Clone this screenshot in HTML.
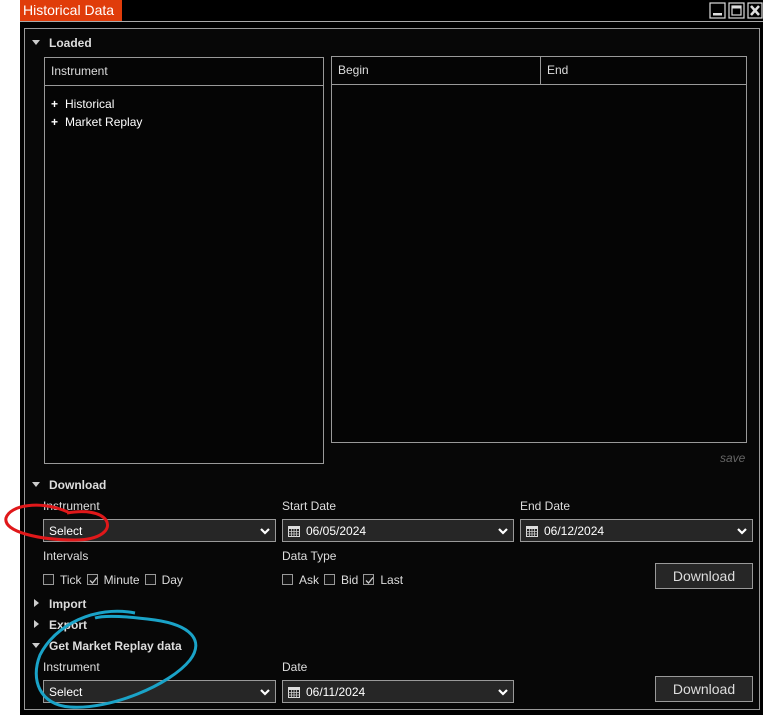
<!DOCTYPE html>
<html><head><meta charset="utf-8"><style>
*{margin:0;padding:0;box-sizing:border-box}
body{width:763px;height:715px;background:#fff;position:relative;overflow:hidden;font-family:"Liberation Sans",Arial,sans-serif;font-size:12px;color:#ddd}
.a{position:absolute}
.win{left:20px;top:0;width:743px;height:715px;background:#000}
.title{left:20px;top:0;width:102px;height:21px;background:#e03c0a;color:#fff;font-size:14px;line-height:21px;padding-left:3px}
.hl{left:20px;top:21px;width:743px;height:1px;background:#aaa}
.panel{left:24px;top:28px;width:736px;height:682px;border:1px solid #999;background:#070707}
.box{border:1px solid #999;background:#050505}
.hdr{border-bottom:1px solid #999;height:28px;line-height:27px;padding-left:6px;color:#ddd}
.bold{font-weight:bold;color:#ddd}
.tri{width:0;height:0;border-left:4px solid transparent;border-right:4px solid transparent;border-top:5px solid #ccc}
.trr{width:0;height:0;border-top:4px solid transparent;border-bottom:4px solid transparent;border-left:5px solid #ccc}
.dd{height:23px;border:1px solid #999;background:#262626;color:#fff;line-height:22px;padding-left:5px}
.chev{position:absolute;right:5px;top:8px}
.cb{width:11px;height:11px;border:1px solid #999;background:#111;display:inline-block;vertical-align:-1px;position:relative;margin-right:6px}
.lbl{margin-right:5px}
.btn{border:1px solid #999;background:#262626;color:#ddd;font-size:14px;text-align:center;line-height:24px}
.cal{display:inline-block;vertical-align:-2px;margin-right:6px}
</style></head><body>
<div class="a win"></div>
<div class="a title">Historical Data</div>
<div class="a hl"></div>
<svg class="a" style="left:709px;top:2px" width="54" height="17">
<rect x="1" y="1" width="15" height="15" fill="none" stroke="#ddd" stroke-width="1.2"/><rect x="4" y="11" width="9" height="2.5" fill="#ddd"/>
<rect x="20" y="1" width="15" height="15" fill="none" stroke="#ddd" stroke-width="1.2"/><rect x="23" y="4" width="9" height="9" fill="none" stroke="#ddd" stroke-width="1.2"/><rect x="23" y="4" width="9" height="2.5" fill="#ddd"/>
<rect x="39" y="1" width="14" height="15" fill="none" stroke="#ddd" stroke-width="1.2"/><path d="M42 4 L50 13 M50 4 L42 13" stroke="#ddd" stroke-width="2.5"/>
</svg>
<div class="a panel"></div>
<div class="a tri" style="left:32px;top:40px"></div>
<div class="a bold" style="left:49px;top:36px">Loaded</div>
<div class="a box" style="left:44px;top:57px;width:280px;height:407px"><div class="hdr">Instrument</div>
<div style="padding:9px 0 0 6px;line-height:18px;color:#fff"><span style="font-weight:bold;margin-right:7px">+</span>Historical<br><span style="font-weight:bold;margin-right:7px">+</span>Market Replay</div></div>
<div class="a box" style="left:331px;top:56px;width:416px;height:387px"><div class="hdr" style="position:relative">Begin<span style="position:absolute;left:208px;top:0;height:27px;border-left:1px solid #999;padding-left:6px">End</span></div></div>
<div class="a" style="left:720px;top:451px;color:#666;font-style:italic">save</div>
<div class="a tri" style="left:32px;top:482px"></div>
<div class="a bold" style="left:49px;top:478px">Download</div>
<div class="a" style="left:43px;top:499px">Instrument</div>
<div class="a" style="left:282px;top:499px">Start Date</div>
<div class="a" style="left:520px;top:499px">End Date</div>
<svg width="0" height="0" style="position:absolute"><defs>
<path id="cv" d="M1 1 L5 5 L9 1" fill="none" stroke="#fff" stroke-width="2.2"/>
<g id="cl"><rect x="0.5" y="0.5" width="11" height="10" fill="#222" stroke="#ddd"/><rect x="0.5" y="0.5" width="11" height="2.5" fill="#ddd"/><path d="M0 5.5H12M0 8H12M3.5 3V11M6 3V11M8.5 3V11" stroke="#ccc" stroke-width="0.8"/></g>
</defs></svg>
<div class="a dd" style="left:43px;top:519px;width:233px">Select<svg class="chev" width="10" height="8"><use href="#cv"/></svg></div>
<div class="a dd" style="left:282px;top:519px;width:232px"><svg class="cal" width="12" height="11"><use href="#cl"/></svg>06/05/2024<svg class="chev" width="10" height="8"><use href="#cv"/></svg></div>
<div class="a dd" style="left:520px;top:519px;width:233px"><svg class="cal" width="12" height="11"><use href="#cl"/></svg>06/12/2024<svg class="chev" width="10" height="8"><use href="#cv"/></svg></div>
<div class="a" style="left:43px;top:549px">Intervals</div>
<div class="a" style="left:282px;top:549px">Data Type</div>
<div class="a" style="left:43px;top:573px"><span class="cb"></span><span class="lbl">Tick</span><span class="cb"><svg class="a" style="left:1px;top:1px" width="9" height="9"><path d="M1 4.5 L3.5 7 L8 1.5" stroke="#ccc" fill="none" stroke-width="1.3"/></svg></span><span class="lbl">Minute</span><span class="cb"></span>Day</div>
<div class="a" style="left:282px;top:573px"><span class="cb"></span><span class="lbl">Ask</span><span class="cb"></span><span class="lbl">Bid</span><span class="cb"><svg class="a" style="left:1px;top:1px" width="9" height="9"><path d="M1 4.5 L3.5 7 L8 1.5" stroke="#ccc" fill="none" stroke-width="1.3"/></svg></span>Last</div>
<div class="a btn" style="left:655px;top:563px;width:98px;height:26px">Download</div>
<div class="a trr" style="left:34px;top:599px"></div>
<div class="a bold" style="left:49px;top:597px">Import</div>
<div class="a trr" style="left:34px;top:620px"></div>
<div class="a bold" style="left:49px;top:618px">Export</div>
<div class="a tri" style="left:32px;top:643px"></div>
<div class="a bold" style="left:49px;top:639px">Get Market Replay data</div>
<div class="a" style="left:43px;top:660px">Instrument</div>
<div class="a" style="left:282px;top:660px">Date</div>
<div class="a dd" style="left:43px;top:680px;width:233px">Select<svg class="chev" width="10" height="8"><use href="#cv"/></svg></div>
<div class="a dd" style="left:282px;top:680px;width:232px"><svg class="cal" width="12" height="11"><use href="#cl"/></svg>06/11/2024<svg class="chev" width="10" height="8"><use href="#cv"/></svg></div>
<div class="a btn" style="left:655px;top:676px;width:98px;height:26px">Download</div>
<svg class="a" style="left:0;top:0" width="763" height="715">
<path d="M68 512 C40 500 10 505 6 518 C3 532 40 540 75 540 C100 540 112 530 106 520 C100 512 85 510 67 513" fill="none" stroke="#e0181a" stroke-width="3"/>
<path d="M135 613 C95 605 55 625 40 655 C30 680 40 705 70 707 C110 710 170 685 190 660 C205 640 190 625 155 620 C125 616 105 615 95 618" fill="none" stroke="#1aa3c8" stroke-width="3"/>
</svg>
</body></html>
